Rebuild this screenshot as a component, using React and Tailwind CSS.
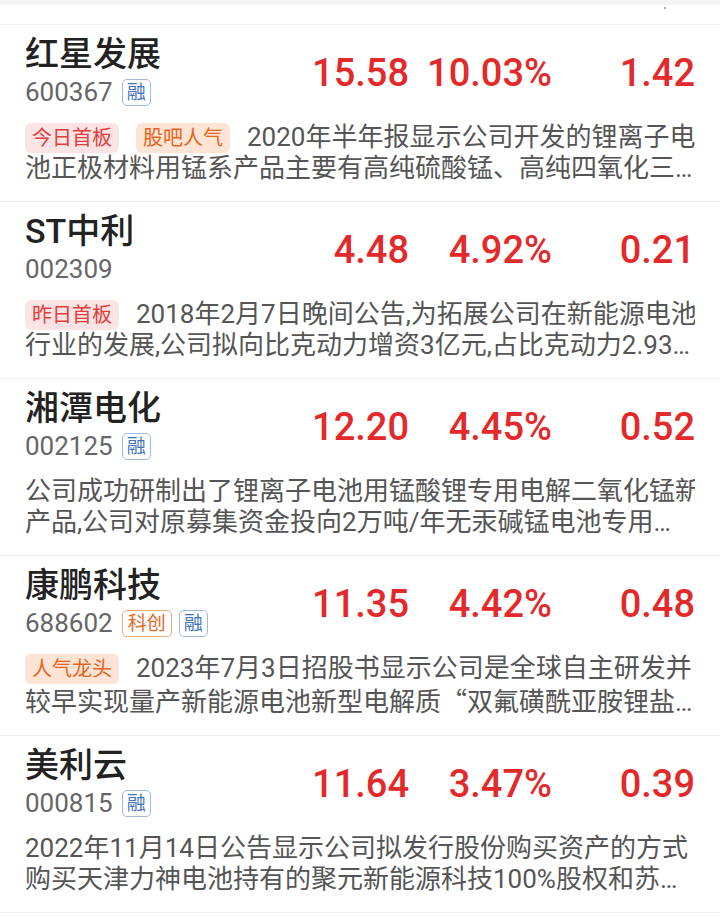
import React from "react";

const FONT = { fontFamily: 'Roboto, "Noto Sans CJK SC", sans-serif' };

const Q = ({ children }) => (
  <span style={{ fontFamily: '"Noto Sans CJK SC", sans-serif' }}>{children}</span>
);

const stocks = [
  {
    name: "红星发展",
    code: "600367",
    badges: ["rong"],
    price: "15.58",
    pct: "10.03%",
    chg: "1.42",
    tags: [
      { t: "今日首板", c: "red" },
      { t: "股吧人气", c: "orange" },
    ],
    l1: "2020年半年报显示公司开发的锂离子电",
    l2: "池正极材料用锰系产品主要有高纯硫酸锰、高纯四氧化三锰等产品",
  },
  {
    name: "ST中利",
    code: "002309",
    badges: [],
    price: "4.48",
    pct: "4.92%",
    chg: "0.21",
    tags: [{ t: "昨日首板", c: "red" }],
    l1: "2018年2月7日晚间公告,为拓展公司在新能源电池",
    l2: "行业的发展,公司拟向比克动力增资3亿元,占比克动力2.93%股权",
  },
  {
    name: "湘潭电化",
    code: "002125",
    badges: ["rong"],
    price: "12.20",
    pct: "4.45%",
    chg: "0.52",
    tags: [],
    l1: "公司成功研制出了锂离子电池用锰酸锂专用电解二氧化锰新",
    l2: "产品,公司对原募集资金投向2万吨/年无汞碱锰电池专用电解二氧化锰项目",
  },
  {
    name: "康鹏科技",
    code: "688602",
    badges: ["kc", "rong"],
    price: "11.35",
    pct: "4.42%",
    chg: "0.48",
    tags: [{ t: "人气龙头", c: "orange" }],
    l1: "2023年7月3日招股书显示公司是全球自主研发并",
    l2: (
      <>
        较早实现量产新能源电池新型电解质<Q>“</Q>双氟磺酰亚胺锂盐<Q>”</Q>的企业
      </>
    ),
  },
  {
    name: "美利云",
    code: "000815",
    badges: ["rong"],
    price: "11.64",
    pct: "3.47%",
    chg: "0.39",
    tags: [],
    l1: "2022年11月14日公告显示公司拟发行股份购买资产的方式",
    l2: "购买天津力神电池持有的聚元新能源科技100%股权和苏州力神的资产",
  },
];

function Badge({ kind }) {
  if (kind === "kc") {
    return (
      <span className="inline-flex items-center justify-center h-[27px] px-[5px] rounded-[5px] border border-[#f0a777] text-[#e8681f] text-[19px] leading-none bg-white">
        科创
      </span>
    );
  }
  return (
    <span className="inline-flex items-center justify-center h-[27px] w-[29px] rounded-[5px] border border-[#9db9de] text-[#3f74bd] text-[19px] leading-none bg-white">
      融
    </span>
  );
}

function Tag({ t, c }) {
  const cls =
    c === "red"
      ? "bg-[#fde4e4] text-[#df3e3d]"
      : "bg-[#fde4d4] text-[#e6641c]";
  return (
    <span
      className={`inline-block h-[30px] px-[7px] mr-[17px] rounded-[6px] text-[20px] leading-[30px] align-[1px] ${cls}`}
    >
      {t}
    </span>
  );
}

function Row({ s }) {
  return (
    <div className="px-[25px] pt-[9px] pb-[17px] border-b border-[#efefef] bg-white">
      <div className="flex items-center">
        <div className="flex-1 min-w-0">
          <div className="text-[34px] leading-[40px] font-medium text-[#222222]">{s.name}</div>
          <div className="mt-[3px] h-[30px] flex items-center">
            <span className="text-[26px] leading-[30px] text-[#666666]">{s.code}</span>
            {s.badges.length > 0 && (
              <div className="ml-[9px] flex items-center gap-[7px]">
                {s.badges.map((b, i) => (
                  <Badge key={i} kind={b} />
                ))}
              </div>
            )}
          </div>
        </div>
        <div className="flex mt-[5px] text-[38px] leading-[38px] font-medium text-[#e4292b]">
          <div className="w-[143px] text-right">{s.price}</div>
          <div className="w-[143px] text-right">{s.pct}</div>
          <div className="w-[143px] text-right">{s.chg}</div>
        </div>
      </div>
      <div className="mt-[15px] text-[26px] leading-[31px] text-[#555555]">
        <div className="whitespace-nowrap overflow-hidden">
          {s.tags.map((tg, i) => (
            <Tag key={i} t={tg.t} c={tg.c} />
          ))}
          {s.l1}
        </div>
        <div className="whitespace-nowrap overflow-hidden text-ellipsis">{s.l2}</div>
      </div>
    </div>
  );
}

export default function App() {
  return (
    <div className="w-[720px] min-h-[917px] bg-white" style={FONT}>
      <div className="h-[5px] bg-[#f4f4f4]" />
      <div className="h-[20px] bg-white border-b border-[#f0f0f0] relative">
        <span className="absolute left-[664px] top-[2px] w-[2px] h-[2px] rounded-full bg-[#9a9a9a]" />
      </div>
      {stocks.map((s, i) => (
        <Row key={i} s={s} />
      ))}
    </div>
  );
}
